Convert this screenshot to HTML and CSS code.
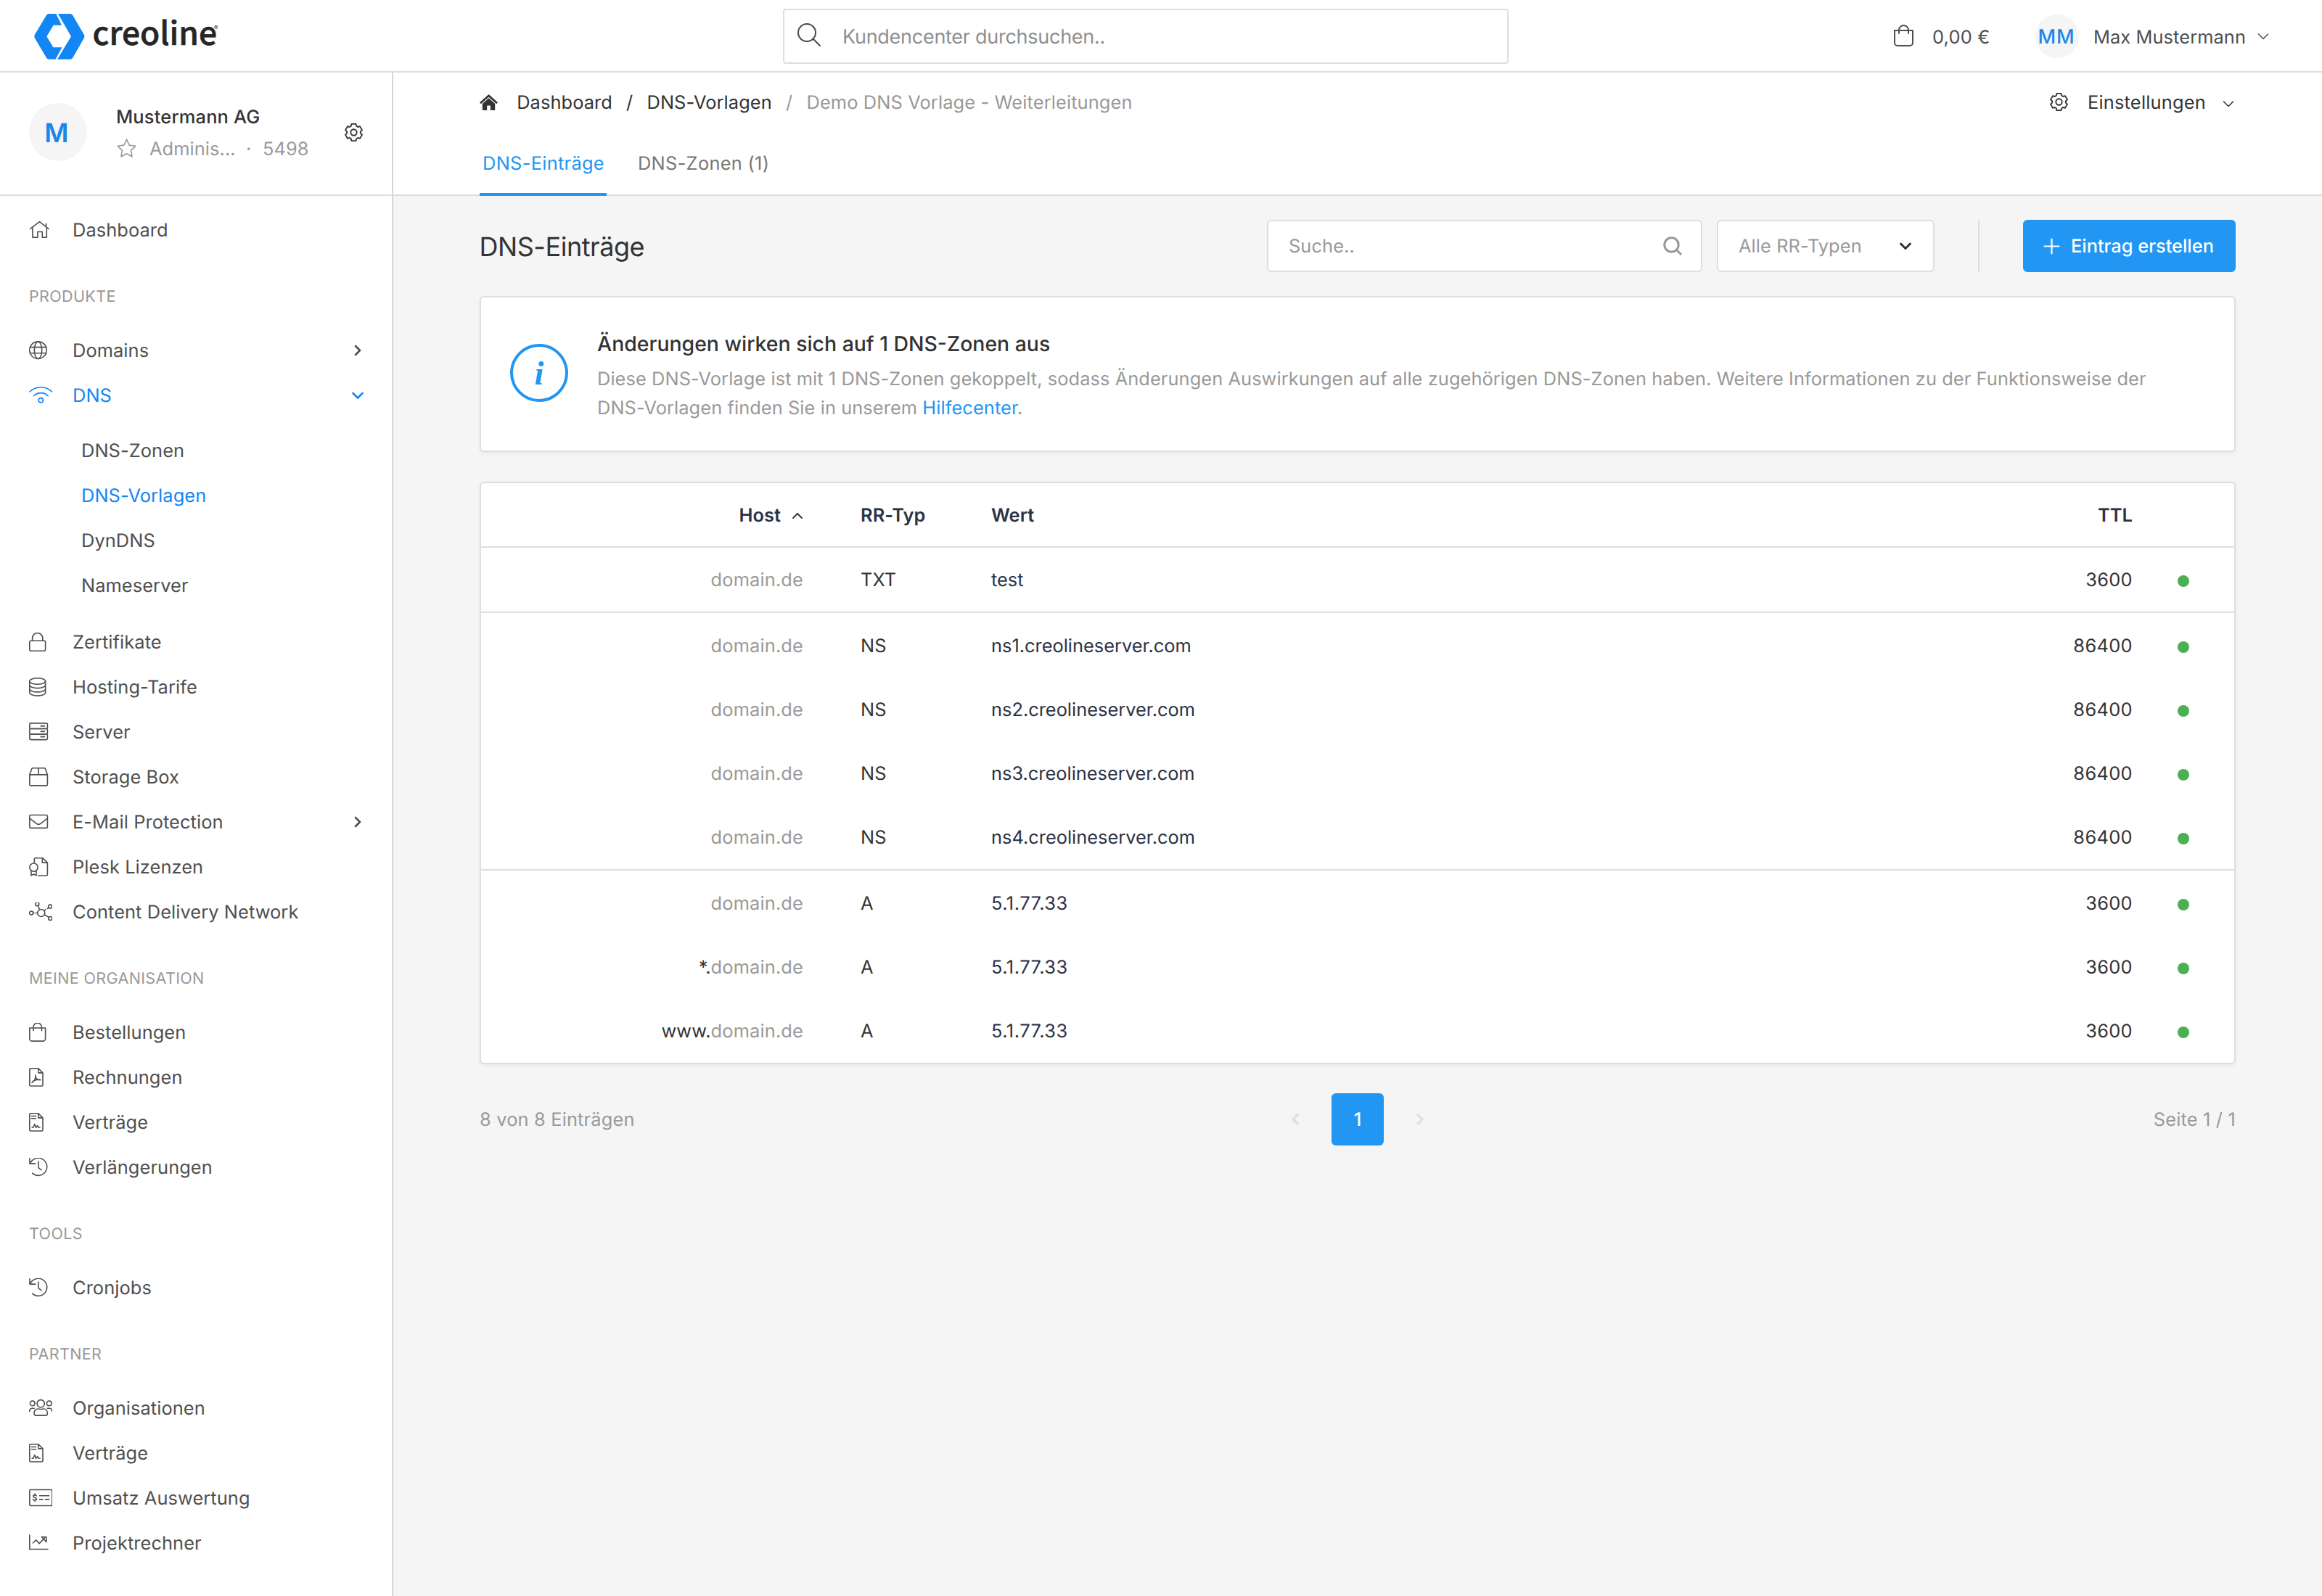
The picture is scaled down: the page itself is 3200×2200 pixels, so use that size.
FILE: index.html
```html
<!DOCTYPE html>
<html lang="de">
<head>
<meta charset="utf-8">
<title>DNS-Einträge – creoline Kundencenter</title>
<link rel="stylesheet" href="styles.css">
</head>
<body>
<svg class="sprite" aria-hidden="true">
  <symbol id="i-home" viewBox="0 0 32 26"><path d="M1.6 11.4 14.5 1.6l12.4 9.8M23.6 8V4.2M4.9 9.6v13.6h7v-7.7h6.4v7.7h6V9.6"/></symbol>
  <symbol id="i-globe" viewBox="0 0 32 26"><circle cx="12.5" cy="12.7" r="11.8"/><ellipse cx="12.5" cy="12.7" rx="5.2" ry="11.8"/><path d="M1.5 8.6h22M1.5 16.8h22"/></symbol>
  <symbol id="i-wifi" viewBox="0 0 32 26"><path d="M1 8c8.600-8.300 22-8.300 30.600 0M6.400 13.800c5.600-5.600 14.300-5.600 19.900 0"/><circle cx="16.300" cy="19.700" r="3.100"/></symbol>
  <symbol id="i-lock" viewBox="0 0 32 26"><rect x=".8" y="11.300" width="21.800" height="13.900" rx="2"/><path d="M4.600 11.300V7.600a7.100 7.100 0 0 1 14.200 0v3.700"/></symbol>
  <symbol id="i-database" viewBox="0 0 32 26"><ellipse cx="11.700" cy="5" rx="10.900" ry="4.300"/><path d="M.8 5v15.800c0 2.400 4.900 4.300 10.900 4.300s10.900-1.900 10.900-4.300V5M.8 10.300c0 2.400 4.900 4.300 10.900 4.300s10.900-1.900 10.900-4.300M.8 15.600c0 2.400 4.900 4.300 10.900 4.300s10.900-1.900 10.900-4.300"/></symbol>
  <symbol id="i-server" viewBox="0 0 32 26"><rect x=".8" y=".9" width="24.600" height="7.600" rx="1.500"/><rect x=".8" y="8.500" width="24.600" height="7.500" rx="1.500"/><rect x=".8" y="16" width="24.600" height="7.600" rx="1.500"/><path stroke-width="2" d="M16.500 4.800h1.500M19.600 4.800h1.500M16.500 12.200h1.500M19.600 12.200h1.500M16.500 19.600h1.500M19.600 19.600h1.500"/></symbol>
  <symbol id="i-box" viewBox="0 0 32 26"><path d="M.8 9.900 3.900 1.500c.2-.5.600-.8 1.100-.8h16.200c.5 0 .9.300 1.100.8l3.100 8.400v13.300a1.700 1.700 0 0 1-1.700 1.700H2.500a1.700 1.700 0 0 1-1.700-1.700zM.8 9.900h24.600M13.100.7v9.200"/></symbol>
  <symbol id="i-mail" viewBox="0 0 32 26"><rect x=".8" y="3.500" width="24.600" height="17.900" rx="2"/><path d="M1 8.200l8.700 6.700c2.300 1.900 4.500 1.900 6.800 0l8.700-6.700"/></symbol>
  <symbol id="i-license" viewBox="0 0 32 26"><path d="M7.300 7V2.300c0-.9.700-1.600 1.600-1.600h9.600l6.900 6.500v16.200c0 .9-.7 1.600-1.600 1.600H12.500M18.300.9v6.200h7"/><circle cx="6.500" cy="13.600" r="5.600"/><path d="M3 18.700v6.200l3.500-1.900 3.500 1.900v-6.200"/></symbol>
  <symbol id="i-cdn" viewBox="0 0 32 26"><circle cx="16.800" cy="14.500" r="5"/><circle cx="11.300" cy="2.300" r="2.500"/><circle cx="29.300" cy="5.600" r="2.500"/><circle cx="3.200" cy="14.500" r="2.500"/><circle cx="29.300" cy="22" r="2.500"/><path d="M12.400 4.700l2.200 5M27 7.100l-1.700 1.200M23 10l-1.800 1.300M5.800 14.500h1.200M9.300 14.500h2.200M21.300 17l6 3.400"/></symbol>
  <symbol id="i-bag" viewBox="0 0 32 26"><path d="M.8 7h21.800v14.700a3.400 3.400 0 0 1-3.400 3.400h-15a3.400 3.400 0 0 1-3.400-3.400zM5.900 10.700V6a5.800 5.800 0 0 1 11.600 0v4.700"/></symbol>
  <symbol id="i-pdf" viewBox="0 0 32 26"><path d="M2.400.7h10.400L19 6.900v16.500c0 .9-.7 1.600-1.600 1.600H2.400c-.9 0-1.600-.7-1.600-1.600V2.300C.8 1.400 1.500.7 2.400.7zM12.800.7v6.200H19"/><path d="M4 20.200c3.200-1.600 5.300-5.600 5-10.200M8.800 10.200c-.4 3.600 2.200 6.700 6.800 6.500M4 20.200c2-3 6-4.500 11.600-4"/></symbol>
  <symbol id="i-contract" viewBox="0 0 32 26"><path d="M2.400.7h10.400L19 6.900v16.500c0 .9-.7 1.600-1.600 1.600H2.400c-.9 0-1.600-.7-1.600-1.600V2.300C.8 1.400 1.500.7 2.400.7zM12.800.7v6.200H19M3.500 4.500h6M3.500 7.800h6M4.200 20.300h1.400l2.200-4.600 1.800 4.500 1.900-2.500 1.400 2.300h2.200"/></symbol>
  <symbol id="i-history" viewBox="0 0 32 26"><path d="M1 .8v7.300h7.800M1.600 7.800A12 12 0 1 1 4.600 21.200M12.900 5v8.700l4 3"/></symbol>
  <symbol id="i-users" viewBox="0 0 32 26"><circle cx="16.200" cy="6.800" r="5.200"/><circle cx="4.700" cy="6.400" r="3.300"/><circle cx="27.700" cy="6.400" r="3.300"/><path d="M7 20.300c0-4 2.400-6.300 5.500-6.300 1.500 0 1.900.5 3.700.5s2.200-.5 3.700-.5c3.100 0 5.500 2.300 5.500 6.300 0 1.900-.9 2.800-2.500 2.800H9.500C7.900 23.100 7 22.200 7 20.300zM.7 17.500c0-2.500 1.500-4.200 3.900-4.200h2.500M31.700 17.500c0-2.500-1.500-4.200-3.900-4.200h-2.500"/></symbol>
  <symbol id="i-money" viewBox="0 0 32 26"><rect x=".8" y="1.500" width="31" height="22" rx="1.500"/><path d="M10.200 9.900c-.6-.8-1.400-1-2.300-1-1.300 0-2.200.7-2.200 1.700 0 2.300 4.700 1.300 4.700 3.600 0 1-.9 1.700-2.300 1.700-1.100 0-2-.4-2.600-1.200M8 7.300v1.600M8 15.900v1.500M14.600 9.800h13M14.600 14.900h4.300M22.700 14.900h4.900"/></symbol>
  <symbol id="i-chart" viewBox="0 0 32 26"><path d="M.8 2v19.500h25.200M5.400 13l4.300-4.300 4.400 4.900 7.700-7.900M17.300 4.500h6.600v6.900z"/></symbol>
  <symbol id="i-gear" viewBox="-12.500 -12.500 25 25"><path d="M-3-11.600H3L3.700-8.700 5.700-7.500 8.500-8.400 11.500-3.100 9.300-1.100V1.100L11.500 3.100 8.500 8.400 5.700 7.500 3.700 8.700 3 11.600H-3L-3.700 8.700-5.700 7.500-8.500 8.400-11.500 3.100-9.300 1.100V-1.100L-11.500-3.100-8.500-8.400-5.700-7.500-3.700-8.700z"/><circle r="4.200"/></symbol>
  <symbol id="i-right" viewBox="0 0 16 16"><path d="M5 2l6 6-6 6"/></symbol>
  <symbol id="i-left" viewBox="0 0 16 16"><path d="M11 2L5 8l6 6"/></symbol>
  <symbol id="i-down" viewBox="0 0 16 16"><path d="M1.500 5l6.500 6.500L14.500 5"/></symbol>
  <symbol id="i-up" viewBox="0 0 16 16"><path d="M2 11l6-6 6 6"/></symbol>
</svg>

<header class="topbar">
  <a class="logo">
    <svg class="logo-mark" viewBox="0 0 70 63"><path d="M20.500 0h9.800L38 15.700H26.700L17.400 31.200 26.400 46.200h12.100L29.600 62.700h-9c-1.600 0-2.900-.8-3.700-2.200L.9 33.500c-.8-1.500-.8-3.200 0-4.700L16.800 2.200C17.600.8 18.900 0 20.500 0zM33 0h16.500c1.700 0 3.200.9 4 2.400l15.300 26.400c.8 1.500.8 3.200 0 4.700L53.500 60.300c-.8 1.500-2.300 2.400-4 2.400H32L51 31.300z"/></svg>
    <span class="logo-name">creoline</span><span class="logo-reg">®</span>
  </a>
  <div class="global-search">
    <svg class="line" viewBox="0 0 32 32"><circle cx="13" cy="13" r="12"/><path d="M21.500 21.500L31 31"/></svg>
    <span>Kundencenter durchsuchen..</span>
  </div>
  <div class="account">
    <svg class="line cart-icon" viewBox="0 0 27 30"><path d="M1 8h25v17a4 4 0 0 1-4 4H5a4 4 0 0 1-4-4zM7 12V7.500a6.500 6.500 0 0 1 13 0V12"/></svg>
    <span class="cart-sum">0,00 €</span>
    <span class="avatar avatar-small">MM</span>
    <span class="user-name">Max Mustermann</span>
    <svg class="line chev"><use href="#i-down"/></svg>
  </div>
</header>

<div class="shell">
  <aside class="sidebar">
    <div class="profile">
      <span class="avatar">M</span>
      <div class="profile-text">
        <div class="profile-name">Mustermann AG</div>
        <div class="profile-sub">
          <svg class="line star" viewBox="0 0 27 27"><path d="M13.500 1.200l3.700 7.900 8.600 1.200-6.300 6 1.600 8.700-7.600-4.200-7.600 4.200 1.600-8.700-6.300-6 8.600-1.200z"/></svg>
          <span class="role">Adminis...</span><span class="sep">·</span><span>5498</span>
        </div>
      </div>
      <svg class="line gear"><use href="#i-gear"/></svg>
    </div>
    <nav class="nav">
      <a class="nav-row"><svg class="line ico"><use href="#i-home"/></svg>Dashboard</a>
      <div class="nav-title">PRODUKTE</div>
      <a class="nav-row"><svg class="line ico"><use href="#i-globe"/></svg>Domains<svg class="line chev nav-chev"><use href="#i-right"/></svg></a>
      <a class="nav-row active"><svg class="line ico"><use href="#i-wifi"/></svg>DNS<svg class="line chev nav-chev"><use href="#i-down"/></svg></a>
      <div class="subnav">
        <a class="nav-row">DNS-Zonen</a>
        <a class="nav-row active">DNS-Vorlagen</a>
        <a class="nav-row">DynDNS</a>
        <a class="nav-row">Nameserver</a>
      </div>
      <a class="nav-row"><svg class="line ico"><use href="#i-lock"/></svg>Zertifikate</a>
      <a class="nav-row"><svg class="line ico"><use href="#i-database"/></svg>Hosting-Tarife</a>
      <a class="nav-row"><svg class="line ico"><use href="#i-server"/></svg>Server</a>
      <a class="nav-row"><svg class="line ico"><use href="#i-box"/></svg>Storage Box</a>
      <a class="nav-row"><svg class="line ico"><use href="#i-mail"/></svg>E-Mail Protection<svg class="line chev nav-chev"><use href="#i-right"/></svg></a>
      <a class="nav-row"><svg class="line ico"><use href="#i-license"/></svg>Plesk Lizenzen</a>
      <a class="nav-row"><svg class="line ico"><use href="#i-cdn"/></svg>Content Delivery Network</a>
      <div class="nav-title">MEINE ORGANISATION</div>
      <a class="nav-row"><svg class="line ico"><use href="#i-bag"/></svg>Bestellungen</a>
      <a class="nav-row"><svg class="line ico"><use href="#i-pdf"/></svg>Rechnungen</a>
      <a class="nav-row"><svg class="line ico"><use href="#i-contract"/></svg>Verträge</a>
      <a class="nav-row"><svg class="line ico"><use href="#i-history"/></svg>Verlängerungen</a>
      <div class="nav-title">TOOLS</div>
      <a class="nav-row"><svg class="line ico"><use href="#i-history"/></svg>Cronjobs</a>
      <div class="nav-title">PARTNER</div>
      <a class="nav-row"><svg class="line ico"><use href="#i-users"/></svg>Organisationen</a>
      <a class="nav-row"><svg class="line ico"><use href="#i-contract"/></svg>Verträge</a>
      <a class="nav-row"><svg class="line ico"><use href="#i-money"/></svg>Umsatz Auswertung</a>
      <a class="nav-row"><svg class="line ico"><use href="#i-chart"/></svg>Projektrechner</a>
    </nav>
  </aside>

  <div class="page">
    <div class="page-head">
      <div class="crumb-row">
        <svg class="home-solid" viewBox="0 0 25 22"><path d="M12.500 0L25 11.300l-1.800 2L12.500 3.700 1.800 13.300 0 11.300zM12.500 5.300l8.700 7.800V22h-6.400v-6.500h-4.600V22H3.800v-8.900z"/></svg>
        <a>Dashboard</a><span>/</span><a>DNS-Vorlagen</a><span class="muted">/</span><span class="muted">Demo DNS Vorlage - Weiterleitungen</span>
        <div class="settings">
          <svg class="line gear"><use href="#i-gear"/></svg>
          <span class="settings-label">Einstellungen</span>
          <svg class="line chev settings-chev"><use href="#i-down"/></svg>
        </div>
      </div>
      <div class="tabs">
        <a class="tab current">DNS-Einträge</a>
        <a class="tab">DNS-Zonen (1)</a>
      </div>
    </div>

    <main class="content">
      <div class="toolbar">
        <h1>DNS-Einträge</h1>
        <div class="field search-field">Suche..<svg viewBox="0 0 26 26" class="line bold"><circle cx="11.500" cy="11.500" r="9.700"/><path d="M18.500 18.500l5.700 5.700"/></svg></div>
        <div class="field type-field">Alle RR-Typen<svg class="line bold chev"><use href="#i-down"/></svg></div>
        <span class="divider"></span>
        <a class="button"><svg class="line plus" viewBox="0 0 21 21"><path d="M10.500 .5v20M.5 10.500h20"/></svg>Eintrag erstellen</a>
      </div>

      <section class="card notice">
        <span class="info-icon">i</span>
        <div class="notice-text">
          <h2>Änderungen wirken sich auf 1 DNS-Zonen aus</h2>
          <p>Diese DNS-Vorlage ist mit 1 DNS-Zonen gekoppelt, sodass Änderungen Auswirkungen auf alle zugehörigen DNS-Zonen haben. Weitere Informationen zu der Funktionsweise der DNS-Vorlagen finden Sie in unserem <a>Hilfecenter</a>.</p>
        </div>
      </section>

      <section class="card records">
        <div class="group head"><div class="row"><span class="host">Host<svg class="line chev sort"><use href="#i-up"/></svg></span><span class="type">RR-Typ</span><span class="value">Wert</span><span class="ttl">TTL</span></div></div>
        <div class="group">
          <div class="row"><span class="host"><i>domain.de</i></span><span class="type">TXT</span><span class="value">test</span><span class="ttl">3600</span><span class="dot"></span></div>
        </div>
        <div class="group spaced">
          <div class="row"><span class="host"><i>domain.de</i></span><span class="type">NS</span><span class="value">ns1.creolineserver.com</span><span class="ttl">86400</span><span class="dot"></span></div>
          <div class="row"><span class="host"><i>domain.de</i></span><span class="type">NS</span><span class="value">ns2.creolineserver.com</span><span class="ttl">86400</span><span class="dot"></span></div>
          <div class="row"><span class="host"><i>domain.de</i></span><span class="type">NS</span><span class="value">ns3.creolineserver.com</span><span class="ttl">86400</span><span class="dot"></span></div>
          <div class="row"><span class="host"><i>domain.de</i></span><span class="type">NS</span><span class="value">ns4.creolineserver.com</span><span class="ttl">86400</span><span class="dot"></span></div>
        </div>
        <div class="group spaced">
          <div class="row"><span class="host"><i>domain.de</i></span><span class="type">A</span><span class="value ip">5.1.77.33</span><span class="ttl">3600</span><span class="dot"></span></div>
          <div class="row"><span class="host">*.<i>domain.de</i></span><span class="type">A</span><span class="value ip">5.1.77.33</span><span class="ttl">3600</span><span class="dot"></span></div>
          <div class="row"><span class="host">www.<i>domain.de</i></span><span class="type">A</span><span class="value ip">5.1.77.33</span><span class="ttl">3600</span><span class="dot"></span></div>
        </div>
      </section>

      <div class="pager">
        <span class="pager-text">8 von 8 Einträgen</span>
        <div class="pages">
          <svg class="line chev page-arrow"><use href="#i-left"/></svg>
          <span class="page-current">1</span>
          <svg class="line chev page-arrow"><use href="#i-right"/></svg>
        </div>
        <span class="pager-text page-info">Seite 1 / 1</span>
      </div>
    </main>
  </div>
</div>
</body>
</html>
```
FILE: styles.css
```css
* { box-sizing: border-box; }

body {
  margin: 0;
  width: 3200px;
  height: 2200px;
  overflow: hidden;
  background: #f5f5f5;
  color: #333;
  font: 400 25.4px/40px Inter, "Liberation Sans", sans-serif;
  letter-spacing: 0.08px;
  text-rendering: geometricPrecision;
}

h1, h2, p { margin: 0; }
svg { flex: none; overflow: visible; }
.sprite { display: none; }
.line {
  fill: none;
  stroke: currentColor;
  stroke-width: 1.6;
  stroke-linecap: round;
  stroke-linejoin: round;
}
.chev { width: 16px; height: 16px; }
.gear { width: 25px; height: 25px; stroke-width: 1.9; }

/* Top bar */
.topbar {
  display: grid;
  grid-template-columns: 1079px 1000px 1fr;
  align-items: center;
  height: 100px;
  padding-top: 2px;
  border-bottom: 2px solid #dedede;
  background: #fff;
}
.logo { display: flex; align-items: center; padding-left: 46.5px; }
.logo-mark { width: 70px; height: 63px; fill: #1386f5; }
.logo-name {
  margin: 0 0 14px 11px;
  font: 500 44.300px/44px "Noto Sans CJK JP", "Noto Sans", sans-serif;
  -webkit-text-stroke: 0.6px #262626;
  color: #262626;
  letter-spacing: 0;
}
.logo-reg { margin: 0 0 25px -4px; font-size: 8px; line-height: 10px; color: #262626; }
.global-search {
  display: flex;
  align-items: center;
  height: 76px;
  padding-left: 18px;
  border: 2px solid #dedede;
  border-radius: 4px;
  color: #8f8f8f;
  font-size: 27px;
  letter-spacing: -0.27px;
}
.global-search svg { width: 32px; height: 32px; margin: 0 30px 4px 0; color: #4a4a4a; stroke-width: 2; }
.global-search span { padding-top: 2px; }
.account { display: flex; align-items: center; justify-content: flex-end; padding-right: 73px; color: #4f4f4f; }
.cart-icon { width: 27px; height: 30px; margin: 0 26px 2px 0; stroke-width: 2; }
.cart-sum { width: 142px; padding-top: 3px; letter-spacing: 0.2px; }
.user-name { width: 226px; padding-top: 3px; }
.avatar {
  flex: none;
  display: flex;
  align-items: center;
  justify-content: center;
  width: 80px;
  height: 80px;
  padding: 2px 4px 0 0;
  border-radius: 50%;
  background: #f5f5f5;
  color: #1a87ea;
  font-size: 36px;
  font-weight: 600;
}
.avatar-small {
  width: 60px;
  height: 60px;
  margin-right: 20px;
  padding: 2px 2px 0 0;
  font-size: 27px;
  font-weight: 500;
  letter-spacing: 0.8px;
}

/* Sidebar */
.shell { display: flex; height: 2100px; }
.sidebar { width: 542px; border-right: 2px solid #d6d6d6; background: #fff; }
.profile {
  display: flex;
  align-items: center;
  height: 170px;
  padding: 0 40px 4px;
  border-bottom: 2px solid #dedede;
}
.profile-text { flex: 1; padding: 3px 0 0 40px; line-height: 44px; }
.profile-name { font-weight: 500; letter-spacing: 0.200px; }
.profile-sub { display: flex; align-items: center; color: #999; }
.star { width: 27px; height: 27px; margin: 0 18px 2px 1px; }
.role { width: 133px; }
.sep { width: 23px; }
.nav { padding-top: 16px; color: #4f4f4f; }
.nav-row { display: flex; align-items: center; height: 62px; padding: 2px 39px 0 40px; }
.ico { width: 32px; height: 26px; margin: 0 28px 2px 0; }
.active { color: #1386f5; }
.nav-chev { margin: 0 0 2px auto; stroke-width: 2.6; }
.nav-title {
  display: flex;
  align-items: center;
  height: 104px;
  padding: 17px 0 0 40px;
  color: #999;
  font-size: 21.500px;
  letter-spacing: 0.370px;
}
.subnav { padding: 14px 0 16px; }
.subnav .nav-row { padding-left: 112px; }

/* Page header */
.page { flex: 1; }
.page-head { height: 170px; padding: 0 119px; border-bottom: 2px solid #dedede; background: #fff; }
.crumb-row { display: flex; align-items: center; gap: 19.200px; height: 81px; }
.crumb-row > a, .crumb-row > span, .settings-label { padding-top: 2px; }
.home-solid { width: 25px; height: 22px; margin-right: 7px; fill: #333; }
.muted { color: #999; letter-spacing: 0.120px; }
.settings { display: flex; align-items: center; margin: 0 2px 0 auto; }
.settings-label { width: 186px; margin-left: 27px; letter-spacing: 0.200px; }
.settings-chev { margin-top: 5px; }
.tabs { display: flex; gap: 38px; }
.tab {
  display: flex;
  align-items: center;
  height: 89px;
  padding: 5px 5px 0;
  border-bottom: 4px solid transparent;
  color: #777;
  letter-spacing: 0.300px;
}
.tab.current { width: 175px; justify-content: center; padding: 5px 0 0 1px; border-color: #2196f3; color: #2196f3; }

/* Content */
.content { padding: 33px 119px 0; }
.toolbar { display: flex; align-items: center; height: 72px; margin-bottom: 33px; }
h1 { flex: 1; padding-top: 2px; font-size: 36px; font-weight: 400; letter-spacing: -0.450px; text-indent: -0.500px; }
.field {
  display: flex;
  align-items: center;
  justify-content: space-between;
  height: 72px;
  padding: 2px 26px 0 28px;
  border: 2px solid #dedede;
  border-radius: 6px;
  background: #fff;
  color: #999;
}
.field svg { margin-bottom: 2px; }
.bold { stroke-width: 3; }
.search-field { width: 600px; margin-right: 20px; }
.search-field svg { width: 26px; height: 26px; }
.type-field { width: 300px; padding-right: 30px; }
.type-field svg { color: #333; }
.divider { width: 2px; height: 72px; margin: 0 60px; background: #dedede; }
.button {
  display: flex;
  align-items: center;
  width: 293px;
  height: 72px;
  padding: 2px 0 0 29px;
  border-radius: 6px;
  background: #2196f3;
  color: #fff;
  font-weight: 500;
  letter-spacing: 0;
}
.plus { width: 21px; height: 21px; margin: 0 16px 2px 0; stroke-width: 2.200; }

.card {
  border: 2px solid #dedede;
  border-radius: 6px;
  background: #fff;
  box-shadow: 0 2px 5px rgba(0, 0, 0, 0.05);
}
.notice { display: flex; align-items: center; height: 215px; margin-bottom: 41px; padding: 0 119px 3px 40px; }
.info-icon {
  flex: none;
  width: 80px;
  height: 80px;
  margin-right: 40px;
  border: 4px solid #2196f3;
  border-radius: 50%;
  color: #2196f3;
  font: italic 700 46px/74px "Liberation Serif", serif;
  text-align: center;
}
.notice-text { flex: 1; padding-top: 1px; color: #999; letter-spacing: 0.075px; }
h2 { margin-bottom: 1px; color: #333; font-size: 28.400px; font-weight: 500; line-height: 56px; letter-spacing: 0; }
.notice a { color: #2196f3; }

.group { border-bottom: 2px solid #dedede; }
.group:last-child { border-bottom: 0; }
.spaced { padding-top: 1px; }
.row { display: grid; grid-template-columns: 444px 259px 1fr 320px 140px; align-items: center; height: 88px; }
.row > :not(.dot) { padding-top: 2px; }
.head .row { height: 87px; color: #2b3245; font-weight: 600; }
.host { display: flex; justify-content: flex-end; align-items: center; }
.host i { color: #999; font-style: normal; letter-spacing: 0.150px; }
.sort { margin-left: 15px; stroke-width: 1.900; }
.type { padding-left: 79px; }
.value { color: #2b3245; letter-spacing: 0; }
.ip { letter-spacing: 0.500px; }
.ttl { text-align: right; letter-spacing: 0.350px; }
.head .ttl { letter-spacing: 0.080px; }
.dot { width: 16px; height: 16px; margin: 3px 0 0 62px; border-radius: 50%; background: #4caf50; }

.pager { display: grid; grid-template-columns: 1fr auto 1fr; align-items: center; margin-top: 40px; color: #999; letter-spacing: 0.170px; }
.pager-text { padding-top: 2px; }
.pages { display: flex; align-items: center; gap: 42px; }
.page-current {
  width: 72px;
  height: 72px;
  padding-top: 1px;
  border-radius: 6px;
  background: #2196f3;
  color: #fff;
  font-weight: 500;
  line-height: 72px;
  text-align: center;
}
.page-arrow { color: #e2e2e2; stroke-width: 4; }
.page-info { text-align: right; }
```
